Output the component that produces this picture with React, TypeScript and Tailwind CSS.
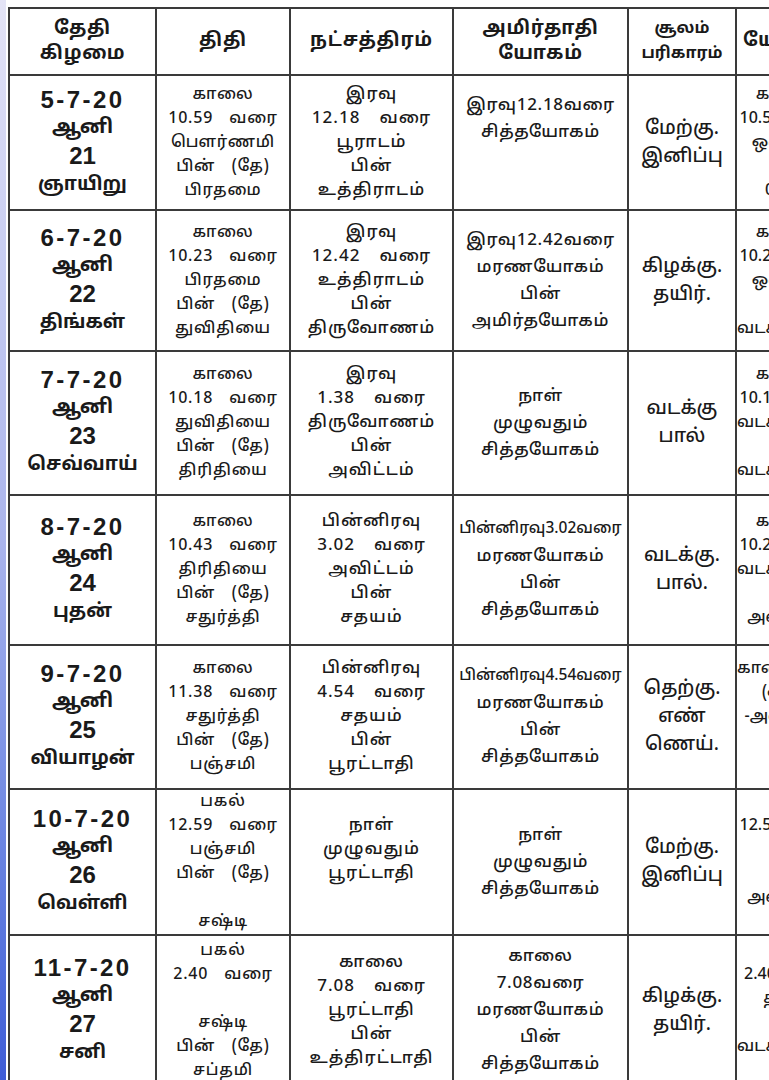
const TA = "font-['Noto_Sans_Tamil','Lohit_Tamil','Noto_Sans',sans-serif]";

type Row = {
  h: string;
  date: string[];
  tithi: string[];
  nak: string[];
  yogam: string[];
  yogamTop?: boolean;
  soolam: string[];
  extra: string[];
};

const ROWS: Row[] = [
  {
    h: "h-[135px]",
    date: ["5-7-20", "ஆனி", "21", "ஞாயிறு"],
    tithi: ["காலை", "10.59 வரை", "பௌர்ணமி", "பின் (தே)", "பிரதமை"],
    nak: ["இரவு", "12.18 வரை", "பூராடம்", "பின்", "உத்திராடம்"],
    yogam: ["இரவு12.18வரை", "சித்தயோகம்"],
    yogamTop: true,
    soolam: ["மேற்கு.", "இனிப்பு"],
    extra: ["காலை", "10.59 வரை", "ஒன்பது", "", "00.00"],
  },
  {
    h: "h-[141px]",
    date: ["6-7-20", "ஆனி", "22", "திங்கள்"],
    tithi: ["காலை", "10.23 வரை", "பிரதமை", "பின் (தே)", "துவிதியை"],
    nak: ["இரவு", "12.42 வரை", "உத்திராடம்", "பின்", "திருவோணம்"],
    yogam: ["இரவு12.42வரை", "மரணயோகம்", "பின்", "அமிர்தயோகம்"],
    soolam: ["கிழக்கு.", "தயிர்."],
    extra: ["காலை", "10.23 வரை", "ஒன்பது", "", "வடக்கு வரை"],
  },
  {
    h: "h-[144px]",
    date: ["7-7-20", "ஆனி", "23", "செவ்வாய்"],
    tithi: ["காலை", "10.18 வரை", "துவிதியை", "பின் (தே)", "திரிதியை"],
    nak: ["இரவு", "1.38 வரை", "திருவோணம்", "பின்", "அவிட்டம்"],
    yogam: ["நாள்", "முழுவதும்", "சித்தயோகம்"],
    soolam: ["வடக்கு", "பால்"],
    extra: ["காலை", "10.18 வரை", "வடக்கு வரை", "", "வடக்கு வரை"],
  },
  {
    h: "h-[150px]",
    date: ["8-7-20", "ஆனி", "24", "புதன்"],
    tithi: ["காலை", "10.43 வரை", "திரிதியை", "பின் (தே)", "சதுர்த்தி"],
    nak: ["பின்னிரவு", "3.02 வரை", "அவிட்டம்", "பின்", "சதயம்"],
    yogam: ["பின்னிரவு3.02வரை", "மரணயோகம்", "பின்", "சித்தயோகம்"],
    soolam: ["வடக்கு.", "பால்."],
    extra: ["காலை", "10.23 வரை", "வடக்கு வரை", "", "அவிட்டம்"],
  },
  {
    h: "h-[144px]",
    date: ["9-7-20", "ஆனி", "25", "வியாழன்"],
    tithi: ["காலை", "11.38 வரை", "சதுர்த்தி", "பின் (தே)", "பஞ்சமி"],
    nak: ["பின்னிரவு", "4.54 வரை", "சதயம்", "பின்", "பூரட்டாதி"],
    yogam: ["பின்னிரவு4.54வரை", "மரணயோகம்", "பின்", "சித்தயோகம்"],
    soolam: ["தெற்கு.", "எண்", "ணெய்."],
    extra: ["காலை வரை", "(ஒன்)", "-அவிட்டம்", "", ""],
  },
  {
    h: "h-[139px]",
    date: ["10-7-20", "ஆனி", "26", "வெள்ளி"],
    tithi: ["பகல்", "12.59 வரை", "பஞ்சமி", "பின் (தே)", "", "சஷ்டி"],
    nak: ["நாள்", "முழுவதும்", "பூரட்டாதி", ""],
    yogam: ["நாள்", "முழுவதும்", "சித்தயோகம்"],
    soolam: ["மேற்கு.", "இனிப்பு"],
    extra: ["12.59 வரை", "", "", "அவிட்டம்"],
  },
  {
    h: "h-[151px]",
    date: ["11-7-20", "ஆனி", "27", "சனி"],
    tithi: ["பகல்", "2.40 வரை", "", "சஷ்டி", "பின் (தே)", "சப்தமி"],
    nak: ["காலை", "7.08 வரை", "பூரட்டாதி", "பின்", "உத்திரட்டாதி"],
    yogam: ["காலை", "7.08வரை", "மரணயோகம்", "பின்", "சித்தயோகம்"],
    soolam: ["கிழக்கு.", "தயிர்."],
    extra: ["2.40 வரை", "தயிர்", "", "வடக்கு வரை"],
  },
];

function Lines({ lines, className, long }: { lines: string[]; className: string; long?: boolean }) {
  return (
    <div className={className}>
      {lines.map((l, i) => (
        <div
          key={i}
          className={`whitespace-nowrap ${long && l.length > 12 ? "text-[15.5px] tracking-normal" : ""}`}
        >
          {l === "" ? "\u00a0" : l}
        </div>
      ))}
    </div>
  );
}

const td = "border-2 border-[#3a3a3a] p-0 text-center align-middle overflow-hidden";

export default function App() {
  return (
    <div className="flex min-h-[1080px] w-[769px] bg-white text-[#1a1a1a]">
      <div className="w-[6px] shrink-0 bg-linear-to-b from-[#e4e4f6] via-[#aab4ec] to-[#3c5ad6]" />
      <div className="w-[763px] overflow-hidden pl-[2px] pt-[7px]">
        <table className="w-[826px] table-fixed border-collapse">
          <colgroup>
            <col className="w-[147px]" />
            <col className="w-[134px]" />
            <col className="w-[163px]" />
            <col className="w-[175px]" />
            <col className="w-[108px]" />
            <col className="w-[99px]" />
          </colgroup>
          <thead>
            <tr className="h-[67px]">
              {[
                ["தேதி", "கிழமை"],
                ["திதி"],
                ["நட்சத்திரம்"],
                ["அமிர்தாதி", "யோகம்"],
                ["சூலம்", "பரிகாரம்"],
                ["யோக நேரம்"],
              ].map((h, i) => (
                <th
                  key={i}
                  className={`${td} ${TA} font-bold leading-[25px] ${
                    i === 4 ? "text-[16px]" : "text-[19px] tracking-[0.04em]"
                  }`}
                >
                  <Lines lines={h} className={i === 5 ? "text-left pl-[6px]" : ""} />
                </th>
              ))}
            </tr>
          </thead>
          <tbody>
            {ROWS.map((r) => (
              <tr key={r.date[0]} className={r.h}>
                <td className={td}>
                  <div className="font-['Liberation_Sans',Arial,sans-serif] text-[24px] font-bold leading-[28px] tracking-[0.1em]">
                    {r.date[0]}
                  </div>
                  <div className={`${TA} text-[20px] font-bold leading-[28px]`}>{r.date[1]}</div>
                  <div className="font-['Liberation_Sans',Arial,sans-serif] text-[24px] font-bold leading-[28px]">
                    {r.date[2]}
                  </div>
                  <div className={`${TA} text-[19px] font-bold leading-[30px]`}>{r.date[3]}</div>
                </td>
                <td className={td}>
                  <Lines
                    lines={r.tithi}
                    className={`${TA} text-[16px] font-medium leading-[24px] tracking-[0.05em] [word-spacing:0.7em]`}
                  />
                </td>
                <td className={td}>
                  <Lines
                    lines={r.nak}
                    className={`${TA} text-[17px] font-medium leading-[24px] tracking-[0.06em] [word-spacing:0.8em]`}
                  />
                </td>
                <td className={`${td} ${r.yogamTop ? "align-top pt-[16px]" : ""}`}>
                  <Lines
                    lines={r.yogam}
                    long
                    className={`${TA} text-[17px] font-medium leading-[27px] tracking-[0.04em]`}
                  />
                </td>
                <td className={td}>
                  <Lines lines={r.soolam} className={`${TA} text-[19px] font-medium leading-[28px]`} />
                </td>
                <td className={td}>
                  <Lines lines={r.extra} className={`${TA} text-[16px] font-medium leading-[24px]`} />
                </td>
              </tr>
            ))}
          </tbody>
        </table>
      </div>
    </div>
  );
}
